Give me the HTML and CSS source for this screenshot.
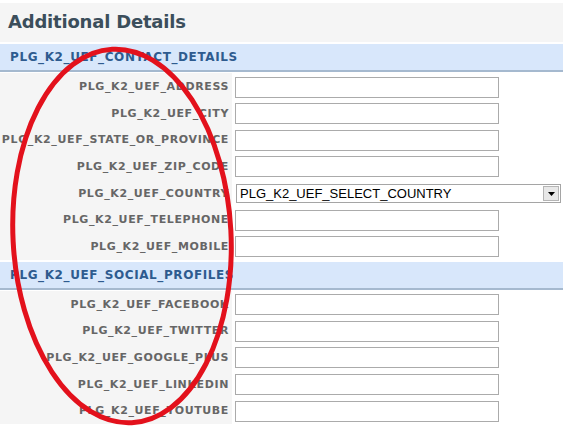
FILE: index.html
```html
<!DOCTYPE html>
<html lang="en">
<head>
  <meta charset="UTF-8">
  <title>Additional Details</title>
  <link rel="stylesheet" href="styles.css">
</head>
<body>
  <div class="panel">
    <h2 class="title">Additional Details</h2>

    <div class="section">PLG_K2_UEF_CONTACT_DETAILS</div>
    <div class="row"><label class="label">PLG_K2_UEF_ADDRESS</label><div class="field"><input type="text"></div></div>
    <div class="row"><label class="label">PLG_K2_UEF_CITY</label><div class="field"><input type="text"></div></div>
    <div class="row"><label class="label">PLG_K2_UEF_STATE_OR_PROVINCE</label><div class="field"><input type="text"></div></div>
    <div class="row"><label class="label">PLG_K2_UEF_ZIP_CODE</label><div class="field"><input type="text"></div></div>
    <div class="row"><label class="label">PLG_K2_UEF_COUNTRY</label>
      <div class="field">
        <div class="select">
          <span class="select-text">PLG_K2_UEF_SELECT_COUNTRY</span>
          <span class="select-btn"><svg width="7" height="4" viewBox="0 0 7 4"><path d="M0 0h7L3.5 4z" fill="#000"/></svg></span>
        </div>
      </div>
    </div>
    <div class="row"><label class="label">PLG_K2_UEF_TELEPHONE</label><div class="field"><input type="text"></div></div>
    <div class="row"><label class="label">PLG_K2_UEF_MOBILE</label><div class="field"><input type="text"></div></div>

    <div class="section">PLG_K2_UEF_SOCIAL_PROFILES</div>
    <div class="row"><label class="label">PLG_K2_UEF_FACEBOOK</label><div class="field"><input type="text"></div></div>
    <div class="row"><label class="label">PLG_K2_UEF_TWITTER</label><div class="field"><input type="text"></div></div>
    <div class="row"><label class="label">PLG_K2_UEF_GOOGLE_PLUS</label><div class="field"><input type="text"></div></div>
    <div class="row"><label class="label">PLG_K2_UEF_LINKEDIN</label><div class="field"><input type="text"></div></div>
    <div class="row"><label class="label">PLG_K2_UEF_YOUTUBE</label><div class="field"><input type="text"></div></div>
  </div>

  <svg class="circle" width="572" height="428" viewBox="0 0 572 428">
    <ellipse cx="122" cy="236" rx="109" ry="187" transform="rotate(-3 122 236)" fill="none" stroke="#e3111c" stroke-width="5"/>
  </svg>
</body>
</html>
```

FILE: styles.css
```css
body {
  margin: 0;
  font-family: "DejaVu Sans", Verdana, sans-serif;
  background: #fff;
  overflow: hidden;
}
.panel {
  width: 563px;
  padding-top: 3px;
}
.title {
  margin: 0;
  height: 39px;
  line-height: 38px;
  padding-left: 8px;
  background: #f5f5f5;
  color: #3b4e5b;
  font-size: 18px;
  font-weight: bold;
  letter-spacing: -0.2px;
}
.section {
  margin-top: 2px;
  height: 26px;
  line-height: 27px;
  padding-left: 10px;
  background: #d8e7fb;
  border-bottom: 2px solid #a5b9cf;
  color: #2e5b8f;
  font-size: 12px;
  font-weight: bold;
  letter-spacing: 0.6px;
}
.section + .row {
  margin-top: 1px;
}
.row {
  display: grid;
  grid-template-columns: 232px 1fr;
  height: 26.67px;
}
.label {
  background: #f5f5f5;
  border-bottom: 1px solid #fff;
  text-align: right;
  padding-right: 3px;
  line-height: 27px;
  color: #666;
  font-size: 11px;
  font-weight: bold;
  letter-spacing: 0.62px;
  white-space: nowrap;
}
.field {
  display: flex;
  align-items: center;
  padding-left: 3px;
}
.field input {
  box-sizing: border-box;
  width: 264px;
  height: 21px;
  margin: 0;
  border: 1px solid #ababab;
  background: #fff;
}
.select {
  box-sizing: border-box;
  width: 325px;
  height: 19px;
  margin-left: 1px;
  border: 1px solid #a5a5a5;
  display: flex;
  align-items: center;
  justify-content: space-between;
  background: #fff;
}
.select-text {
  font-family: "Liberation Sans", Arial, sans-serif;
  font-size: 13px;
  color: #000;
  padding-left: 3px;
}
.select-btn {
  box-sizing: border-box;
  width: 16px;
  height: 15px;
  margin-right: 1px;
  border: 1px solid #b5b5b5;
  background: #e8e8e8;
  display: flex;
  align-items: center;
  justify-content: center;
}
.circle {
  position: absolute;
  left: 0;
  top: 0;
  pointer-events: none;
}
```
